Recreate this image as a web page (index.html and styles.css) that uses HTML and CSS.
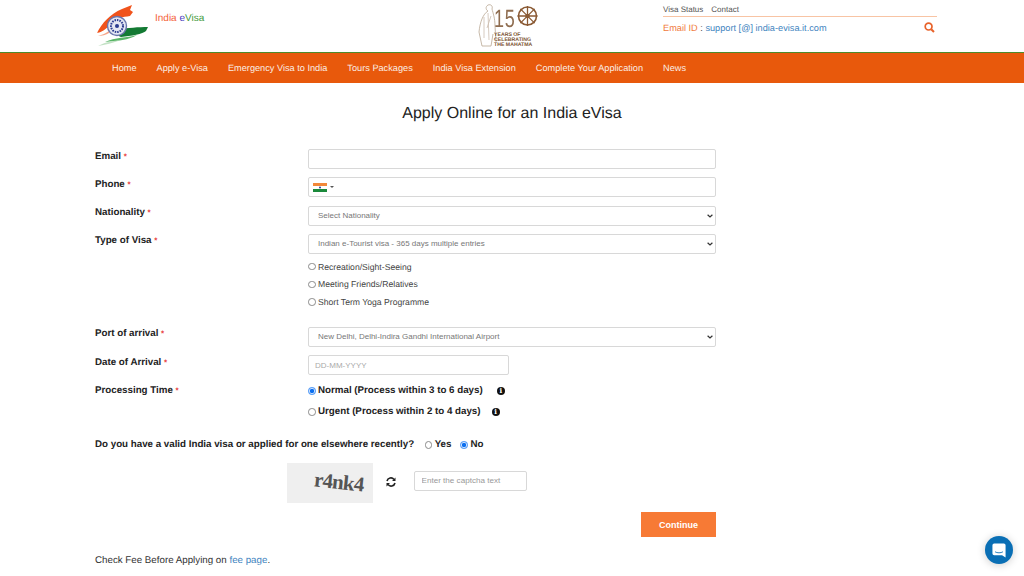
FILE: index.html
```html
<!DOCTYPE html>
<html lang="en">
<head>
    <meta charset="UTF-8">
    <meta name="viewport" content="width=device-width, initial-scale=1.0">
    <title>Apply Online for an India eVisa</title>
    <link rel="stylesheet" href="styles.css">
</head>
<body>
    <!-- Top header -->
    <header class="header">
        <div class="brand">
            <svg class="brand-logo" width="53" height="42" viewBox="0 0 53 42">
                <path d="M0 28 C5 18 13 9 25 4 L35 0 L33 5 L36 7 L33 11 C26 12 18 13 13 20 C9 24 5 27 0 28 Z" fill="#f0531c"/>
                <path d="M1 31 C5 30 9 28 12 26 L12 28 C9 30 5 31 1 31 Z" fill="#f6a58a"/>
                <path d="M22 24 C30 23 42 22 51 22 L49 26 C46 29 34 31 24 32 C20 31 20 27 22 24 Z" fill="#137a33"/>
                <path d="M8 37 C18 32 30 33 40 30 C32 35 20 36 8 37 Z" fill="#58b566"/>
                <path d="M1 41 C8 37 16 36 24 35 C16 38 8 40 1 41 Z" fill="#c4e2c6"/>
                <circle cx="20" cy="21" r="9.5" fill="#e4e6f2" stroke="#6a76ad" stroke-width="1.4"/>
                <circle cx="20" cy="21" r="6" fill="none" stroke="#2a3a8f" stroke-width="2" stroke-dasharray="1.5 1"/>
                <circle cx="20" cy="21" r="2" fill="#2a3a8f"/>
            </svg>
            <span class="brand-name"><span class="brand-india">India</span> <span class="brand-e">e</span><span class="brand-visa">Visa</span></span>
        </div>
        <div class="anniversary">
            <svg class="gandhi" width="19" height="44" viewBox="0 0 19 44">
                <path d="M10 1 C13 0 15 2 14 5 C15 9 17 14 17 22 L18 38 M10 1 C7 3 8 6 10 7 C5 10 2 18 1 28 L4 42 L13 42 L15 30" fill="none" stroke="#b9a793" stroke-width="0.8"/>
                <path d="M6 13 L6 34 M10 9 L11 36 M13 12 L9 24" fill="none" stroke="#cbbdae" stroke-width="0.8"/>
            </svg>
            <div class="anniversary-body">
                <div class="anniversary-top">
                    <span class="anniversary-num">15</span>
                    <svg width="21" height="22" viewBox="0 0 21 22">
                        <circle cx="10.5" cy="11" r="9" fill="none" stroke="#8a5a34" stroke-width="1.6"/>
                        <path d="M10.5 1 V21 M0.5 11 H20.5 M3.4 3.9 L17.6 18.1 M17.6 3.9 L3.4 18.1" stroke="#8a5a34" stroke-width="1.3"/>
                        <circle cx="10.5" cy="11" r="2.2" fill="#8a5a34"/>
                    </svg>
                </div>
                <div class="anniversary-text">YEARS OF<br>CELEBRATING<br>THE MAHATMA</div>
            </div>
        </div>
        <div class="top-info">
            <div class="top-links"><a href="#">Visa Status</a><a href="#">Contact</a></div>
            <div class="top-contact">
                <span><span class="email-label">Email ID</span> : <a href="#">support [@] india-evisa.it.com</a></span>
                <svg width="11" height="11" viewBox="0 0 11 11">
                    <circle cx="4.6" cy="4.6" r="3.4" fill="none" stroke="#e8622a" stroke-width="1.7"/>
                    <path d="M7.2 7.2 L10 10" stroke="#e8622a" stroke-width="2"/>
                </svg>
            </div>
        </div>
    </header>

    <!-- Main nav -->
    <nav class="nav">
        <a href="#">Home</a>
        <a href="#">Apply e-Visa</a>
        <a href="#">Emergency Visa to India</a>
        <a href="#">Tours Packages</a>
        <a href="#">India Visa Extension</a>
        <a href="#">Complete Your Application</a>
        <a href="#">News</a>
    </nav>

    <main class="page">
        <h1>Apply Online for an India eVisa</h1>

        <form class="visa-form">
            <div class="row">
                <label>Email <span class="req">*</span></label>
                <input type="text" class="field">
            </div>
            <div class="row">
                <label>Phone <span class="req">*</span></label>
                <div class="field phone">
                    <svg width="14" height="9" viewBox="0 0 14 9">
                        <rect width="14" height="3" fill="#f2883a"/>
                        <rect y="3" width="14" height="3" fill="#fff"/>
                        <rect y="6" width="14" height="3" fill="#1b8a3c"/>
                        <circle cx="7" cy="4.5" r="1" fill="#2a3a8f"/>
                    </svg>
                    <span class="caret"></span>
                </div>
            </div>
            <div class="row">
                <label>Nationality <span class="req">*</span></label>
                <select class="field"><option>Select Nationality</option></select>
            </div>
            <div class="row">
                <label>Type of Visa <span class="req">*</span></label>
                <select class="field"><option>Indian e-Tourist visa - 365 days multiple entries</option></select>
            </div>
            <div class="row purpose">
                <div></div>
                <div>
                    <div class="purpose-item"><input type="radio" name="purpose">Recreation/Sight-Seeing</div>
                    <div class="purpose-item"><input type="radio" name="purpose">Meeting Friends/Relatives</div>
                    <div class="purpose-item"><input type="radio" name="purpose">Short Term Yoga Programme</div>
                </div>
            </div>
            <div class="row">
                <label>Port of arrival <span class="req">*</span></label>
                <select class="field"><option>New Delhi, Delhi-Indira Gandhi International Airport</option></select>
            </div>
            <div class="row">
                <label>Date of Arrival <span class="req">*</span></label>
                <input type="text" class="field date" placeholder="DD-MM-YYYY">
            </div>
            <div class="row">
                <label>Processing Time <span class="req">*</span></label>
                <div class="process">
                    <div class="process-item normal"><input type="radio" name="time" checked>Normal (Process within 3 to 6 days)<span class="info">i</span></div>
                    <div class="process-item urgent"><input type="radio" name="time">Urgent (Process within 2 to 4 days)<span class="info">i</span></div>
                </div>
            </div>
            <div class="question">
                <span>Do you have a valid India visa or applied for one elsewhere recently?</span>
                <span class="answer"><input type="radio" name="prior">Yes</span>
                <span class="answer"><input type="radio" name="prior" checked>No</span>
            </div>
            <div class="captcha">
                <div class="captcha-img"><span>r4nk4</span></div>
                <svg class="refresh" width="10" height="10" viewBox="0 0 10 10">
                    <path d="M1 4 A4 4 0 0 1 8 2.4 M9 6 A4 4 0 0 1 2 7.6" fill="none" stroke="#222" stroke-width="1.6"/>
                    <path d="M9.5 0.5 V4 H6 Z M0.5 9.5 V6 H4 Z" fill="#222"/>
                </svg>
                <input type="text" class="captcha-input" placeholder="Enter the captcha text">
            </div>
            <div class="actions">
                <button type="button">Continue</button>
            </div>
        </form>

        <p class="fee-note">Check Fee Before Applying on <a href="#">fee page</a>.</p>
    </main>

    <!-- Chat launcher -->
    <div class="chat">
        <svg width="14" height="15" viewBox="0 0 16 17">
            <path d="M2.5 0.5 H13.5 A2 2 0 0 1 15.5 2.5 V16.5 L11.5 14 H2.5 A2 2 0 0 1 0.5 12 V2.5 A2 2 0 0 1 2.5 0.5 Z" fill="#fff"/>
            <path d="M3.5 10 C6 11.5 10 11.5 12.5 10" fill="none" stroke="#0a6fb5" stroke-width="1"/>
        </svg>
    </div>
</body>
</html>
```

FILE: styles.css
```css
/* Page base */
body {
    margin: 0;
    background-color: #fff;
    color: #222;
    font-family: "Liberation Sans", Arial, sans-serif;
    text-rendering: geometricPrecision;
    height: 576px;
    overflow: hidden;
}
a {
    text-decoration: none;
}

/* Header */
.header {
    display: flex;
    height: 52px;
    padding-left: 95px;
    padding-right: 87px;
    border-bottom: 1px solid #4d8a2c;
}
.brand {
    display: flex;
    align-items: flex-start;
    width: 383px;
    padding-top: 5px;
    box-sizing: border-box;
}
.brand-logo {
    margin-left: 2px;
    filter: blur(0.4px);
}
.brand-name {
    margin-left: 5px;
    padding-top: 8px;
    font-size: 10px;
}
.brand-india {
    color: #f4633a;
}
.brand-e {
    color: #4b3fc0;
}
.brand-visa {
    color: #3f9a3c;
}
.anniversary {
    display: flex;
    width: 185px;
    padding-top: 4px;
    box-sizing: border-box;
}
.gandhi {
    flex: none;
}
.anniversary-body {
    margin-left: -3px;
}
.anniversary-top {
    display: flex;
    align-items: center;
    height: 29px;
}
.anniversary-num {
    width: 23px;
    font-size: 25px;
    line-height: 20px;
    letter-spacing: 1px;
    color: #8f6d50;
    transform: scaleX(0.72);
    transform-origin: left center;
}
.anniversary-top svg {
    margin-top: -6px;
}
.anniversary-text {
    font-size: 5.2px;
    line-height: 5.2px;
    font-weight: bold;
    color: #7a5230;
}
.top-info {
    flex: 1;
    font-size: 8px;
    padding-top: 5px;
}
.top-links {
    padding-bottom: 2px;
    height: 9px;
    border-bottom: 1px solid #f8c4a4;
}
.top-links a {
    color: #555;
    margin-right: 8px;
}
.top-contact {
    display: flex;
    justify-content: space-between;
    align-items: center;
    margin-top: 5px;
    padding-right: 2px;
    font-size: 9.2px;
    color: #444;
}
.top-contact a {
    color: #3f84c0;
}
.email-label {
    color: #f07a3c;
}

/* Main nav */
.nav {
    display: flex;
    gap: 20px;
    height: 30px;
    align-items: center;
    padding-left: 112px;
    background-color: #e8590c;
}
.nav a {
    color: #fbeee6;
    font-size: 9.2px;
}

/* Form page */
.page {
    padding-left: 95px;
}
h1 {
    width: 834px;
    margin: 21px 0 26px;
    font-size: 16px;
    line-height: 19px;
    font-weight: normal;
    text-align: center;
    color: #222;
}
.row {
    display: grid;
    grid-template-columns: 213px 408px;
    margin-bottom: 8.3px;
}
.row label {
    padding-top: 1.5px;
    font-size: 9.75px;
    font-weight: bold;
    line-height: 11px;
    color: #222;
}
.req {
    color: #e84040;
    font-size: 8px;
}
.field {
    display: block;
    width: 100%;
    height: 20px;
    box-sizing: border-box;
    padding: 0 6px;
    border: 1px solid #d8d8d8;
    border-radius: 2px;
    background-color: #fff;
    font-family: "Liberation Sans", Arial, sans-serif;
    font-size: 8px;
    color: #777;
}
select.field {
    appearance: none;
    padding-left: 9px;
    background-image: url("data:image/svg+xml,%3Csvg xmlns='http://www.w3.org/2000/svg' width='6' height='4'%3E%3Cpath d='M0.6 0.7 L3 3 L5.4 0.7' fill='none' stroke='%23333' stroke-width='1.2'/%3E%3C/svg%3E");
    background-repeat: no-repeat;
    background-position: right 2px center;
}
.field.date {
    width: 201px;
}
.field.date::placeholder {
    color: #aaa;
}
.phone {
    display: flex;
    align-items: center;
    gap: 3px;
    padding-left: 4px;
}
.caret {
    width: 0;
    height: 0;
    border-left: 2px solid transparent;
    border-right: 2px solid transparent;
    border-top: 2px solid #555;
}
input[type="radio"] {
    appearance: none;
    flex: none;
    box-sizing: border-box;
    width: 7.5px;
    height: 7.5px;
    margin: 0 2.5px 0 0;
    border: 0.75px solid #8a8a8a;
    border-radius: 50%;
    background-color: #fff;
}
input[type="radio"]:checked {
    border-color: #3c8df5;
    background: radial-gradient(circle, #0b6ff0 0 42%, #cfe3fd 60%);
}
.purpose {
    height: 69px;
    margin-top: -4.3px;
    margin-bottom: 0;
}
.purpose-item {
    display: flex;
    align-items: center;
    height: 17.7px;
    font-size: 8.65px;
    color: #444;
}
.process {
    margin-top: -3px;
}
.process-item {
    display: flex;
    align-items: center;
    font-size: 9.75px;
    font-weight: bold;
    color: #222;
    height: 21px;
}
.normal .info {
    margin-left: 14px;
}
.urgent .info {
    margin-left: 11px;
}
.info {
    display: inline-block;
    width: 8px;
    height: 8px;
    border-radius: 50%;
    background-color: #111;
    color: #fff;
    font-family: "DejaVu Serif", serif;
    font-size: 7px;
    line-height: 8px;
    text-align: center;
}
.question {
    display: flex;
    align-items: center;
    font-size: 9.75px;
    font-weight: bold;
    height: 12px;
    margin-top: 16.5px;
}
.answer {
    display: flex;
    align-items: center;
    margin-left: 10.5px;
}
.answer + .answer {
    margin-left: 9px;
}
.captcha {
    display: flex;
    align-items: center;
    margin-top: 12.5px;
    margin-left: 192px;
}
.captcha-img {
    width: 86px;
    height: 40px;
    background-color: #efefef;
    text-align: right;
    box-sizing: border-box;
    padding-right: 9px;
}
.captcha-img span {
    display: inline-block;
    font-family: "Liberation Serif", serif;
    font-weight: bold;
    font-size: 21px;
    letter-spacing: -0.8px;
    line-height: 38px;
    color: #555;
    transform: rotate(6deg);
}
.refresh {
    margin-left: 13px;
    margin-top: -2px;
}
.captcha-input {
    width: 113px;
    height: 20px;
    box-sizing: border-box;
    margin-top: -5px;
    margin-left: 18px;
    padding: 0 6.5px;
    border: 1px solid #d8d8d8;
    border-radius: 2px;
    font-family: "Liberation Sans", Arial, sans-serif;
    font-size: 8.1px;
}
.captcha-input::placeholder {
    color: #999;
}
.actions {
    width: 621px;
    margin-top: 9px;
    text-align: right;
}
.actions button {
    width: 75px;
    height: 25px;
    padding: 0;
    border: 0;
    background-color: #f77a35;
    color: #fff;
    font-family: "Liberation Sans", Arial, sans-serif;
    font-size: 9px;
    font-weight: bold;
}
.fee-note {
    margin: 17.5px 0 0;
    font-size: 9.75px;
    line-height: 12px;
    color: #333;
}
.fee-note a {
    color: #3f84c0;
}

/* Chat launcher */
.chat {
    position: fixed;
    right: 11px;
    bottom: 12px;
    display: flex;
    align-items: center;
    justify-content: center;
    width: 28px;
    height: 28px;
    border-radius: 50%;
    background-color: #0a6fb5;
    box-shadow: 0 1px 8px rgba(0, 0, 0, 0.2);
}
```
